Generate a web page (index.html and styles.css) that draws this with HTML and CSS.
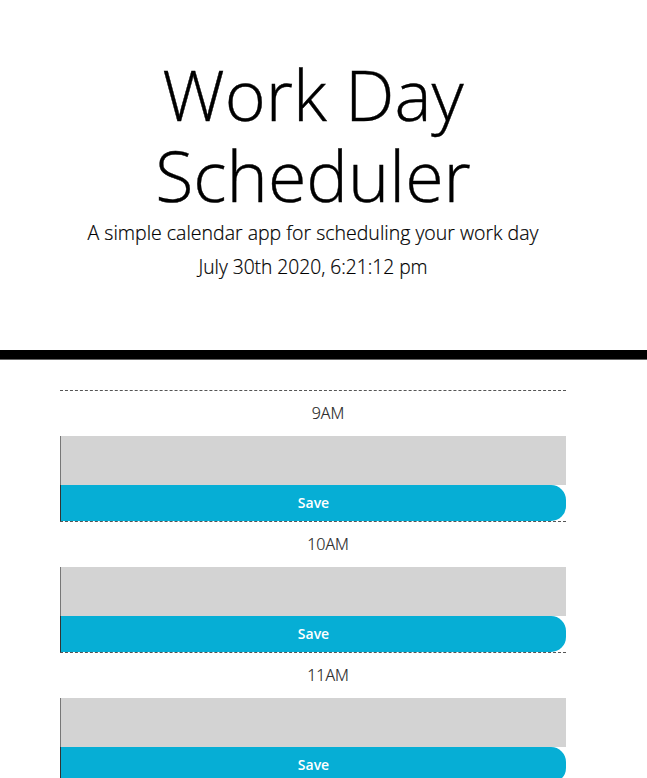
FILE: index.html
```html
<!DOCTYPE html>
<html lang="en">
<head>
<meta charset="utf-8">
<title>Work Day Scheduler</title>
<link rel="stylesheet" href="styles.css">
</head>
<body>
  <header class="jumbotron">
    <div class="inner">
      <h1 class="title">Work Day Scheduler</h1>
      <p class="lead">A simple calendar app for scheduling your work day</p>
      <p class="lead date">July 30th 2020, 6:21:12 pm</p>
    </div>
  </header>
  <main class="container">
    <section class="time-block">
      <div class="hour">9AM</div>
      <textarea class="description"></textarea>
      <button class="saveBtn">Save</button>
    </section>
    <section class="time-block">
      <div class="hour">10AM</div>
      <textarea class="description"></textarea>
      <button class="saveBtn">Save</button>
    </section>
    <section class="time-block">
      <div class="hour">11AM</div>
      <textarea class="description"></textarea>
      <button class="saveBtn">Save</button>
    </section>
  </main>
</body>
</html>
```
FILE: styles.css
```css
html, body {
  margin: 0;
  padding: 0;
  background: #fff;
  overflow: hidden;
}
body {
  font-family: "Open Sans", "Liberation Sans", sans-serif;
  color: #000;
}
.jumbotron {
  border-bottom: 9px solid #000;
  box-shadow: 0 1px 0 #666;
  padding: 54px 0 68px;
}
.inner {
  width: 506px;
  margin-left: 60px;
  text-align: center;
}
.title {
  margin: 0;
  font-size: 70px;
  line-height: 81px;
  font-weight: 300;
  -webkit-text-stroke: 0.4px #000;
}
.lead {
  margin: 0;
  font-size: 19.5px;
  line-height: 30px;
  font-weight: 300;
  -webkit-text-stroke: 0.2px #000;
}
.lead:first-of-type {
  margin-top: 2px;
}
.date {
  margin-top: 4px;
  font-size: 19.2px;
}
.container {
  width: 506px;
  margin: 31px 0 0 60px;
}
.time-block {
  display: flex;
  flex-direction: column;
  border-top: 1px dashed #555;
}
.hour {
  padding: 10px 0 11px 30px;
  font-size: 16px;
  line-height: 24px;
  font-weight: 300;
  color: #222;
  -webkit-text-stroke: 0.2px #222;
  text-align: center;
}
.description {
  display: block;
  box-sizing: border-box;
  height: 49px;
  margin: 0;
  padding: 0;
  border: none;
  border-left: 1px solid #777;
  background: #d3d3d3;
  resize: none;
}
.saveBtn {
  display: block;
  box-sizing: border-box;
  height: 36px;
  margin: 0;
  padding: 0 0 1px;
  border: none;
  border-left: 1px solid #333;
  border-radius: 0 15px 15px 0;
  background: #06aed5;
  color: #fff;
  font-family: "Open Sans", "Liberation Sans", sans-serif;
  font-size: 14px;
  font-weight: 600;
}
```
